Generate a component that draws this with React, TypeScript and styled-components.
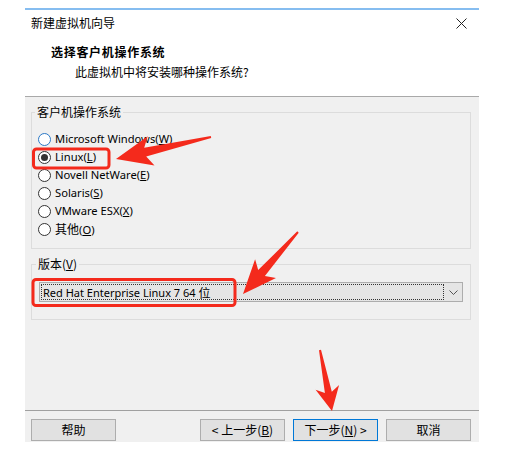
import React from "react";
import styled, { createGlobalStyle } from "styled-components";

const Global = createGlobalStyle`
  html, body { margin: 0; padding: 0; background: #ffffff; }
  body {
    font-family: "Noto Sans", "Noto Sans CJK SC", sans-serif;
    font-size: 12px;
    color: #000;
  }
`;

const Page = styled.div`
  position: relative;
  width: 520px;
  height: 456px;
  padding: 8px 0 0 25px;
  box-sizing: border-box;
`;

const Dialog = styled.div`
  width: 454px;
  border-top: 2px solid #86bdf0;
  display: flex;
  flex-direction: column;
`;

const Header = styled.div`
  background: #ffffff;
  height: 86px;
  border-bottom: 1px solid #a9a9a9;
  display: flex;
  flex-direction: column;
`;

const TitleBar = styled.div`
  height: 26px;
  display: flex;
  align-items: center;
  justify-content: space-between;
  padding: 0 12px 0 6px;
`;

const Title = styled.span`
  font-family: "Noto Sans CJK SC", sans-serif;
  font-size: 12px;
  line-height: 16px;
`;

const CloseIcon = styled.svg`
  width: 11px;
  height: 11px;
  display: block;
`;

const Heading = styled.div`
  font-family: "Noto Sans CJK SC", sans-serif;
  font-weight: 700;
  font-size: 12px;
  letter-spacing: 0.7px;
  line-height: 16px;
  margin-top: 8px;
  padding-left: 26px;
`;

const SubHeading = styled.div`
  font-family: "Noto Sans CJK SC", sans-serif;
  font-size: 12px;
  line-height: 16px;
  margin-top: 4px;
  padding-left: 50px;
`;

const Body = styled.div`
  background: #f0f0f0;
  height: 345px;
  display: flex;
  flex-direction: column;
`;

const Content = styled.div`
  padding: 7px 8px 0 6px;
  display: flex;
  flex-direction: column;
  gap: 7px;
`;

const Group = styled.fieldset<{ $pt: number; $pb: number; $pl: number }>`
  margin: 0;
  border: 1px solid #dcdcdc;
  padding: ${(p) => p.$pt}px 7px ${(p) => p.$pb}px ${(p) => p.$pl}px;
  min-width: 0;
`;

const Legend = styled.legend`
  padding: 0 2px;
  margin-left: -3px;
  line-height: 16px;
  font-family: "Noto Sans CJK SC", sans-serif;
  font-size: 12px;
  color: #000;
`;

const RadioList = styled.div`
  display: flex;
  flex-direction: column;
`;

const RadioRow = styled.label`
  height: 18px;
  display: flex;
  align-items: center;
  gap: 4px;
  line-height: 16px;
`;

const RadioCircle = styled.span<{ $checked?: boolean; $hover?: boolean }>`
  width: 11px;
  height: 11px;
  border-radius: 50%;
  border: 1px solid ${(p) => (p.$hover ? "#2b78c6" : "#333333")};
  background: #ffffff;
  display: flex;
  align-items: center;
  justify-content: center;
  flex: none;
  &::after {
    content: "";
    width: 7px;
    height: 7px;
    border-radius: 50%;
    background: #333333;
    display: ${(p) => (p.$checked ? "block" : "none")};
  }
`;

const RadioText = styled.span`
  font-family: "Noto Sans", "Noto Sans CJK SC", sans-serif;
  font-size: 11.2px;
`;

const Cjk = styled.span`
  font-family: "Noto Sans CJK SC", sans-serif;
  font-size: 12px;
`;

const Combo = styled.div`
  height: 20px;
  box-sizing: border-box;
  background: #e5e5e5;
  border: 1px solid #adadad;
  display: flex;
  align-items: center;
  padding: 1px 0 1px 1px;
`;

const ComboValue = styled.div`
  flex: 1;
  height: 100%;
  box-sizing: border-box;
  border: 1px dotted #333;
  display: flex;
  align-items: center;
  padding-left: 1px;
  font-family: "Noto Sans", "Noto Sans CJK SC", sans-serif;
  font-size: 11px;
`;

const ComboArrow = styled.div`
  width: 18px;
  display: flex;
  align-items: center;
  justify-content: center;
`;

const Footer = styled.div`
  margin-top: auto;
  border-top: 1px solid #a0a0a0;
  padding: 8px 8px 1px 6px;
  display: flex;
  align-items: center;
`;

const Spacer = styled.div`
  flex: 1;
`;

const ButtonGroup = styled.div`
  display: flex;
  gap: 8px;
`;

const Button = styled.button<{ $primary?: boolean }>`
  width: 85px;
  height: 22px;
  box-sizing: border-box;
  margin: 0;
  padding: 0;
  background: #e1e1e1;
  border: 1px solid ${(p) => (p.$primary ? "#0078d7" : "#adadad")};
  font-family: "Noto Sans CJK SC", sans-serif;
  font-size: 12px;
  color: #000;
  line-height: 16px;
`;

const Overlay = styled.svg`
  position: absolute;
  left: 0;
  top: 0;
  width: 520px;
  height: 456px;
  pointer-events: none;
`;

function arrow(
  sx: number,
  sy: number,
  tx: number,
  ty: number,
  headLen: number,
  headHalf: number,
  neckHalf: number,
  tailHalf: number,
  notch: number
): string {
  const dx = tx - sx;
  const dy = ty - sy;
  const len = Math.hypot(dx, dy);
  const ux = dx / len;
  const uy = dy / len;
  const nx = -uy;
  const ny = ux;
  const bx = tx - ux * headLen;
  const by = ty - uy * headLen;
  const kx = tx - ux * (headLen - notch);
  const ky = ty - uy * (headLen - notch);
  const pts: [number, number][] = [
    [sx + nx * tailHalf, sy + ny * tailHalf],
    [kx + nx * neckHalf, ky + ny * neckHalf],
    [bx + nx * headHalf, by + ny * headHalf],
    [tx, ty],
    [bx - nx * headHalf, by - ny * headHalf],
    [kx - nx * neckHalf, ky - ny * neckHalf],
    [sx - nx * tailHalf, sy - ny * tailHalf],
  ];
  return pts.map((p) => `${p[0].toFixed(1)},${p[1].toFixed(1)}`).join(" ");
}

const RED = "#f42a1c";

const options = [
  { label: "Microsoft Windows", key: "W", checked: false, hover: true },
  { label: "Linux", key: "L", checked: true },
  { label: "Novell NetWare", key: "E", checked: false },
  { label: "Solaris", key: "S", checked: false },
  { label: "VMware ESX", key: "X", checked: false },
  { label: "其他", key: "O", checked: false, cjk: true },
];

export default function App() {
  return (
    <>
      <Global />
      <Page>
        <Dialog>
          <Header>
            <TitleBar>
              <Title>新建虚拟机向导</Title>
              <CloseIcon viewBox="0 0 11 11">
                <path d="M0.5 0.5 L10.5 10.5 M10.5 0.5 L0.5 10.5" stroke="#222" strokeWidth="1" fill="none" />
              </CloseIcon>
            </TitleBar>
            <Heading>选择客户机操作系统</Heading>
            <SubHeading>此虚拟机中将安装哪种操作系统?</SubHeading>
          </Header>
          <Body>
            <Content>
              <Group $pt={10} $pb={10} $pl={6}>
                <Legend>客户机操作系统</Legend>
                <RadioList>
                  {options.map((o) => (
                    <RadioRow key={o.key}>
                      <RadioCircle $checked={o.checked} $hover={o.hover} />
                      <RadioText>
                        {o.cjk ? <Cjk>{o.label}</Cjk> : o.label}(<u>{o.key}</u>)
                      </RadioText>
                    </RadioRow>
                  ))}
                </RadioList>
              </Group>
              <Group $pt={10} $pb={17} $pl={7}>
                <Legend>
                  版本(<u>V</u>)
                </Legend>
                <Combo>
                  <ComboValue>
                    Red Hat Enterprise Linux 7 64&nbsp;<Cjk>位</Cjk>
                  </ComboValue>
                  <ComboArrow>
                    <svg width="9" height="5" viewBox="0 0 9 5">
                      <path d="M0.5 0.5 L4.5 4.5 L8.5 0.5" stroke="#555" strokeWidth="1" fill="none" />
                    </svg>
                  </ComboArrow>
                </Combo>
              </Group>
            </Content>
            <Footer>
              <Button>帮助</Button>
              <Spacer />
              <ButtonGroup>
                <Button>
                  &lt; 上一步(<u>B</u>)
                </Button>
                <Button $primary>
                  下一步(<u>N</u>) &gt;
                </Button>
                <Button>取消</Button>
              </ButtonGroup>
            </Footer>
          </Body>
        </Dialog>
        <Overlay viewBox="0 0 520 456">
          <rect x="33.5" y="149" width="75.5" height="19" rx="3" fill="none" stroke={RED} strokeWidth="3" />
          <rect x="33" y="279.5" width="202" height="26" rx="3" fill="none" stroke={RED} strokeWidth="3" />
          <polygon points={arrow(211, 137, 116, 159, 36, 15, 4.5, 1, 6)} fill={RED} />
          <polygon points={arrow(298, 232, 243, 294, 34, 14, 4.5, 1, 6)} fill={RED} />
          <polygon points={arrow(320, 350, 332, 411, 24, 12, 3.5, 1, 5)} fill={RED} />
        </Overlay>
      </Page>
    </>
  );
}
